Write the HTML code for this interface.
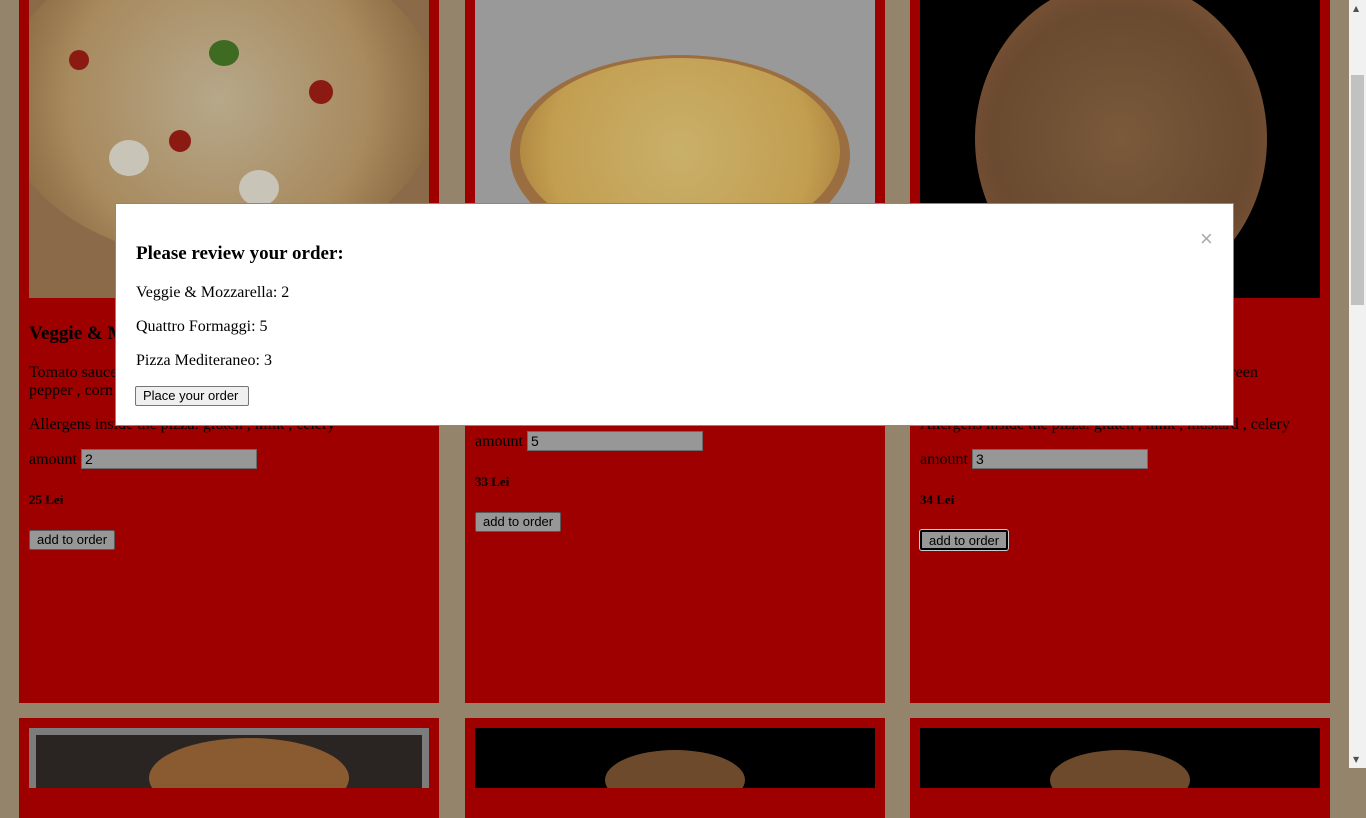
<!DOCTYPE html>
<html><head><meta charset="utf-8"><style>
*{margin:0;padding:0;box-sizing:border-box}
html,body{width:1366px;height:768px;overflow:hidden;background:#94846b;font-family:"Liberation Serif",serif;color:#000}
.card{position:absolute;background:#9e0000;width:420px}
.img{position:absolute;left:10px;width:400px;overflow:hidden}
.t{position:absolute;font-size:16px;white-space:nowrap}
.in{position:absolute;height:20px;background:#979797;border:1px solid #6a6a6a;font:14px "Liberation Sans",sans-serif;padding:1px 3px}
.btn{position:absolute;height:20px;background:#979797;border:1px solid #5a5a5a;border-radius:2px;font:13px "Liberation Sans",sans-serif;padding:1px 7px;white-space:nowrap}
.sb{position:absolute;right:0;top:0;width:17px;height:768px;background:#f1f1f1}
</style></head><body>
<!-- row 1 -->
<div class="card" style="left:19px;top:-10px;height:713px">
 <div class="img" style="top:10px;height:298px;background:#8a6a48">
  <div style="position:absolute;left:-30px;top:-60px;width:440px;height:320px;border-radius:50%;background:radial-gradient(circle,#b6a88a 0%,#a88a5e 55%,#8a6a42 80%)"></div>
  <div style="position:absolute;left:40px;top:50px;width:20px;height:20px;border-radius:50%;background:#8a1a12"></div>
  <div style="position:absolute;left:140px;top:130px;width:22px;height:22px;border-radius:50%;background:#8a1a12"></div>
  <div style="position:absolute;left:280px;top:80px;width:24px;height:24px;border-radius:50%;background:#8a1a12"></div>
  <div style="position:absolute;left:80px;top:140px;width:40px;height:36px;border-radius:50%;background:#c8c4b8"></div>
  <div style="position:absolute;left:210px;top:170px;width:40px;height:36px;border-radius:50%;background:#c8c4b8"></div>
  <div style="position:absolute;left:180px;top:40px;width:30px;height:26px;border-radius:50%;background:#3f6a22"></div>
 </div>
 <div class="t" style="left:10px;top:333px;font-size:19px;font-weight:bold">Veggie &amp; Mozzarella</div>
 <div class="t" style="left:10px;top:374px">Tomato sauce , mozzarella , mushrooms , tomatoes , green</div>
 <div class="t" style="left:10px;top:392px">pepper , corn</div>
 <div class="t" style="left:10px;top:426px">Allergens inside the pizza: gluten , milk , celery</div>
 <div class="t" style="left:10px;top:461px">amount</div>
 <div class="in" style="left:62px;top:459px;width:176px">2</div>
 <div class="t" style="left:10px;top:502px;font-size:13px;font-weight:bold">25 Lei</div>
 <div class="btn" style="left:10px;top:540px">add to order</div>
</div>
<div class="card" style="left:465px;top:-10px;height:713px">
 <div class="img" style="top:10px;height:298px;background:#999">
  <div style="position:absolute;left:35px;top:55px;width:340px;height:200px;border-radius:50%;background:#9a6e40"></div>
  <div style="position:absolute;left:45px;top:58px;width:320px;height:186px;border-radius:50%;background:radial-gradient(circle,#c9b06a 0%,#c29e50 70%,#a57a38 100%)"></div>
 </div>
 <div class="t" style="left:10px;top:443px">amount</div>
 <div class="in" style="left:62px;top:441px;width:176px">5</div>
 <div class="t" style="left:10px;top:484px;font-size:13px;font-weight:bold">33 Lei</div>
 <div class="btn" style="left:10px;top:522px">add to order</div>
</div>
<div class="card" style="left:910px;top:-10px;height:713px">
 <div class="img" style="top:10px;height:298px;background:#000">
  <div style="position:absolute;left:55px;top:-20px;width:292px;height:318px;border-radius:50%;background:radial-gradient(circle,#7a5a3a 0%,#6a4a30 60%,#8a5a38 95%)"></div>
 </div>
 <div class="t" style="left:10px;top:333px;font-size:19px;font-weight:bold">Pizza Mediteraneo</div>
 <div class="t" style="left:10px;top:374px">Tomato sauce , mozzarella , olives , tomatoes , green</div>
 <div class="t" style="left:10px;top:392px">pepper</div>
 <div class="t" style="left:10px;top:426px">Allergens inside the pizza: gluten , milk , mustard , celery</div>
 <div class="t" style="left:10px;top:461px">amount</div>
 <div class="in" style="left:62px;top:459px;width:176px">3</div>
 <div class="t" style="left:10px;top:502px;font-size:13px;font-weight:bold">34 Lei</div>
 <div class="btn" style="left:10px;top:540px;border:2px solid #000;box-shadow:0 0 0 1px #ccc">add to order</div>
</div>
<!-- row 2 -->
<div class="card" style="left:19px;top:718px;height:100px"><div class="img" style="top:10px;height:60px;background:#7c7c7c"><div style="position:absolute;left:7px;top:7px;width:386px;height:60px;background:#2a2522"></div><div style="position:absolute;left:120px;top:10px;width:200px;height:80px;border-radius:50%;background:#8a5a30"></div></div></div>
<div class="card" style="left:465px;top:718px;height:100px"><div class="img" style="top:10px;height:60px;background:#000"><div style="position:absolute;left:130px;top:22px;width:140px;height:60px;border-radius:50%;background:#6e4a2c"></div></div></div>
<div class="card" style="left:910px;top:718px;height:100px"><div class="img" style="top:10px;height:60px;background:#000"><div style="position:absolute;left:130px;top:22px;width:140px;height:60px;border-radius:50%;background:#6e4a2c"></div></div></div>
<!-- modal -->
<div style="position:absolute;left:115px;top:203px;width:1119px;height:223px;background:#fff;border:1px solid #888">
 <div class="t" style="left:1084px;top:22px;font:22px 'Liberation Sans',sans-serif;color:#aaa">×</div>
 <div class="t" style="left:20px;top:39px;font-size:19px;font-weight:bold">Please review your order:</div>
 <div class="t" style="left:20px;top:80px">Veggie &amp; Mozzarella: 2</div>
 <div class="t" style="left:20px;top:114px">Quattro Formaggi: 5</div>
 <div class="t" style="left:20px;top:148px">Pizza Mediteraneo: 3</div>
 <div class="btn" style="left:19px;top:182px;background:#efefef;border-color:#767676;width:114px">Place your order</div>
</div>
<div class="sb"><div style="position:absolute;left:2px;top:75px;width:13px;height:230px;background:#c1c1c1"></div>
<div style="position:absolute;left:4px;top:4px;font-size:8px;color:#505050;font-family:'DejaVu Sans',sans-serif">▲</div>
<div style="position:absolute;left:4px;top:755px;font-size:8px;color:#505050;font-family:'DejaVu Sans',sans-serif">▼</div></div>
</body></html>
